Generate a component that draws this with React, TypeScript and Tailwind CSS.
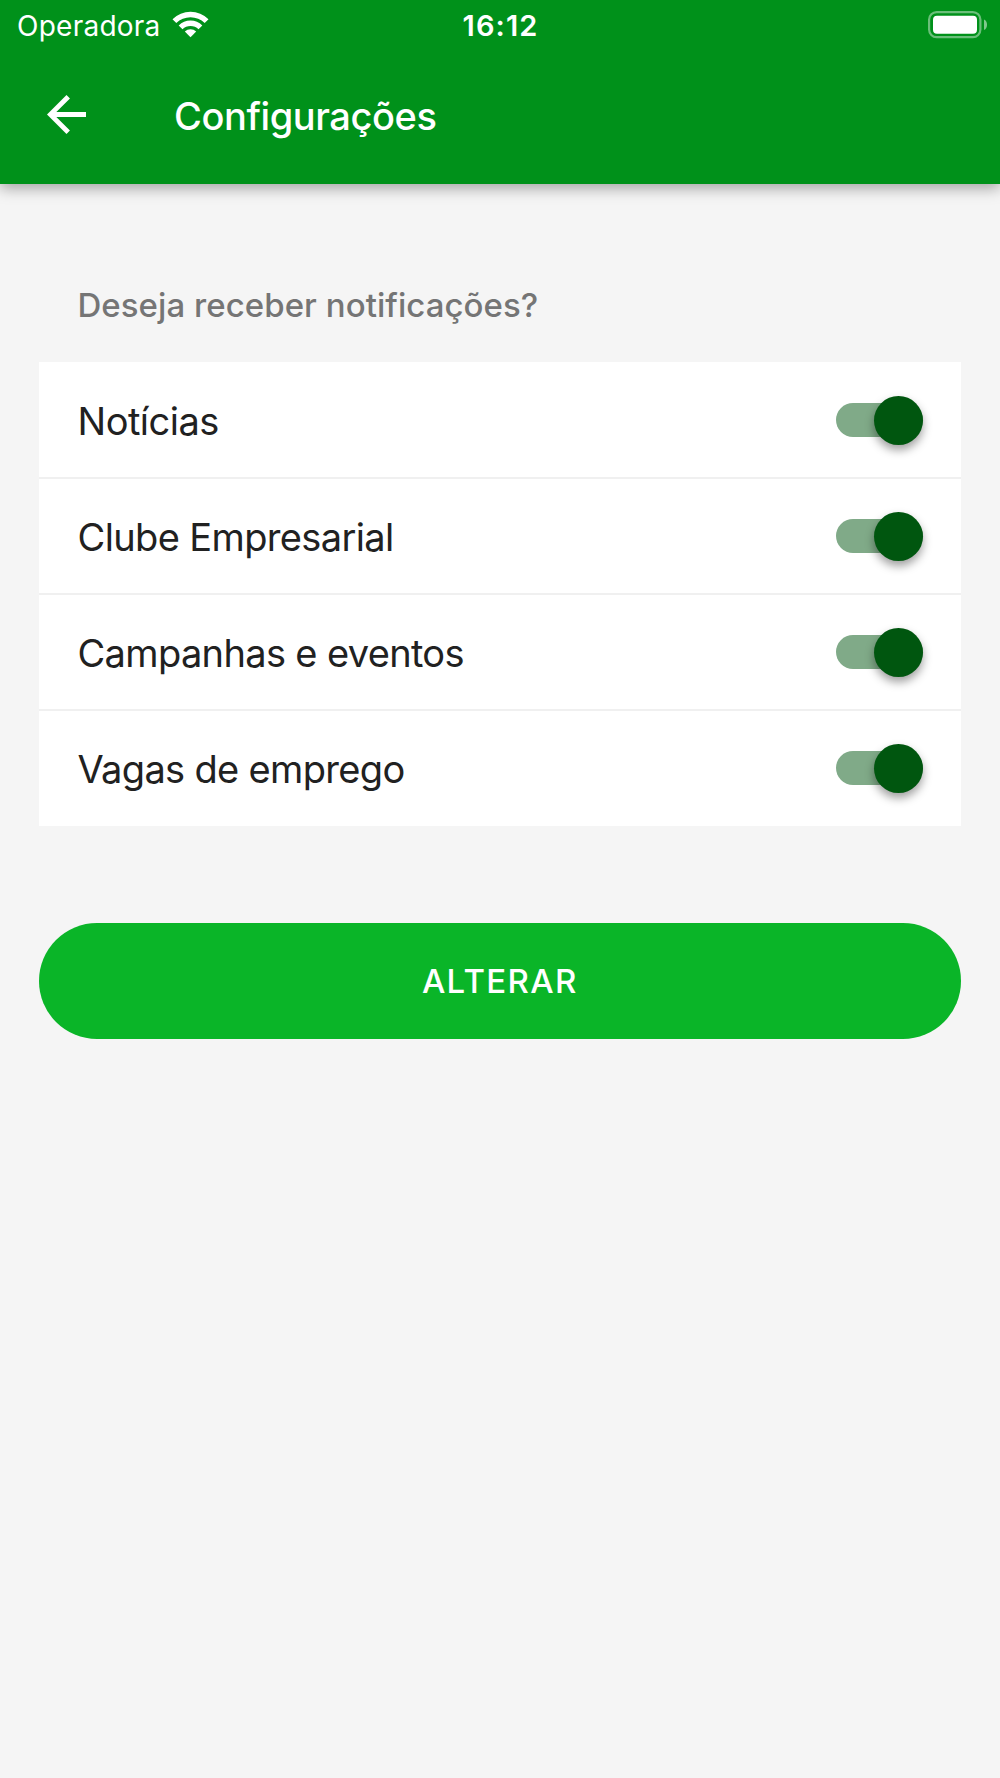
import React, { useState } from "react";

const initialSettings = [
  { id: "noticias", label: "Notícias", enabled: true, spacing: "tracking-[-0.5px]" },
  { id: "clube", label: "Clube Empresarial", enabled: true, spacing: "tracking-[-0.63px]" },
  { id: "campanhas", label: "Campanhas e eventos", enabled: true, spacing: "tracking-[-0.65px]" },
  { id: "vagas", label: "Vagas de emprego", enabled: true, spacing: "tracking-[-0.67px]" },
];

const WifiIcon: React.FC = () => (
  <svg width="37" height="27" viewBox="0 0 37 27" fill="#fff" className="mb-[2px]">
    <path d="M0.5 8.2 A25.6 25.6 0 0 1 36.5 8.2 L32.7 12 A20.2 20.2 0 0 0 4.3 12 Z" />
    <path d="M6.7 14.4 A16.8 16.8 0 0 1 30.3 14.4 L26.5 18.2 A11.4 11.4 0 0 0 10.5 18.2 Z" />
    <path d="M12.8 20.5 A8.1 8.1 0 0 1 24.2 20.5 L18.5 26.3 Z" />
  </svg>
);

const BatteryIcon: React.FC = () => (
  <svg width="60" height="28" viewBox="0 0 60 28">
    <rect x="1.1" y="1.1" width="51.3" height="25" rx="7.5" fill="none" stroke="#fff" strokeOpacity="0.42" strokeWidth="2.2" />
    <rect x="5" y="4.8" width="44" height="18" rx="4" fill="#fff" />
    <path d="M56 8.5 C60 10 60 17.500 56 19 Z" fill="#fff" fillOpacity="0.5" />
  </svg>
);

const BackIcon: React.FC = () => (
  <svg width="39" height="39" viewBox="4 4 16 16" fill="#fff">
    <path d="M20 11H7.830l5.590-5.590L12 4l-8 8 8 8 1.410-1.410L7.830 13H20v-2z" />
  </svg>
);

const Toggle: React.FC<{ checked: boolean; onChange: () => void }> = ({
  checked,
  onChange,
}) => (
  <button
    type="button"
    role="switch"
    aria-checked={checked}
    onClick={onChange}
    className={`flex h-[34px] w-[87px] items-center rounded-full ${
      checked ? "justify-end bg-[#80aa88]" : "justify-start bg-gray-300"
    }`}
  >
    <span
      className={`size-[49px] shrink-0 rounded-full shadow-[0_5px_10px_rgba(0,0,0,0.38)] ${
        checked ? "bg-[#00560f]" : "bg-white"
      }`}
    />
  </button>
);

const App: React.FC = () => {
  const [settings, setSettings] = useState(initialSettings);

  const handleToggle = (id: string) => {
    setSettings(
      settings.map((item) =>
        item.id === id ? { ...item, enabled: !item.enabled } : item
      )
    );
  };

  return (
    <div className="min-h-[1778px] w-[1000px] bg-[#f5f5f5] font-['Inter',sans-serif]">
      <header className="h-[184px] bg-[#00911a] text-white shadow-[0_4px_14px_rgba(0,0,0,0.35)]">
        <div className="grid h-[50px] grid-cols-3 items-center pr-3 pb-[2px] pl-[17px]">
          <div className="flex items-center gap-[11px]">
            <span className="pt-[2px] text-[28px] leading-[48px] tracking-[0.25px]">
              Operadora
            </span>
            <WifiIcon />
          </div>
          <span className="pt-[2px] pr-1 text-center text-[29px] leading-[48px] font-semibold tracking-[1.1px]">
            16:12
          </span>
          <div className="flex justify-end">
            <BatteryIcon />
          </div>
        </div>
        <div className="flex h-[134px] items-center pb-[5px] pl-[47px]">
          <button type="button" aria-label="Voltar">
            <BackIcon />
          </button>
          <h1 className="ml-[88px] pt-[3px] text-[38px] leading-[48px] font-[450] tracking-[-0.42px]">
            Configurações
          </h1>
        </div>
      </header>

      <main className="pt-[98px] pr-[39px] pl-[38.5px]">
        <h2 className="pl-[39px] text-[33px] leading-[46px] font-[480] tracking-[0.05px] text-[#757575]">
          Deseja receber notificações?
        </h2>
        <ul className="mt-[34px]">
          {settings.map((item) => (
            <li
              key={item.id}
              className="flex h-[116px] items-center justify-between border-t-2 border-[#f0f0f0] bg-white pr-[38px] pl-[39px] first:h-[115px] first:border-t-0 first:pt-px last:h-[117px] last:pb-px"
            >
              <span className={`pt-[2px] text-[38px] leading-[48px] text-[#212121] ${item.spacing}`}>
                {item.label}
              </span>
              <Toggle
                checked={item.enabled}
                onChange={() => handleToggle(item.id)}
              />
            </li>
          ))}
        </ul>
        <button
          type="button"
          className="mt-[97px] h-[116px] w-full rounded-full bg-[#0ab528] pt-[2px] text-[33px] font-[450] tracking-[1.3px] text-white"
        >
          ALTERAR
        </button>
      </main>
    </div>
  );
};

export default App;
